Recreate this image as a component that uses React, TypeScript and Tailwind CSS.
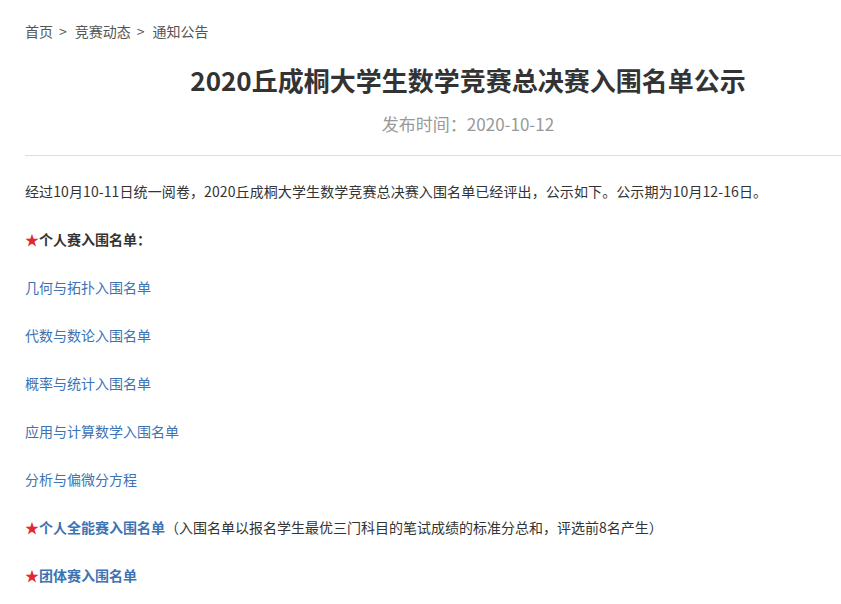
export default function App() {
  const links = [
    "几何与拓扑入围名单",
    "代数与数论入围名单",
    "概率与统计入围名单",
    "应用与计算数学入围名单",
    "分析与偏微分方程",
  ];

  return (
    <div
      className="w-full min-h-screen overflow-hidden bg-white text-[#333]"
      style={{ fontFamily: '"Noto Sans CJK SC", "Noto Sans", sans-serif' }}
    >
      <div className="ml-[25px] w-[886px] pt-[19px]">
        {/* breadcrumb */}
        <div className="flex items-center text-[14px] leading-[24px] text-[#555]">
          <span>首页</span>
          <span className="ml-[6px] mr-[8px]">&gt;</span>
          <span>竞赛动态</span>
          <span className="ml-[6px] mr-[8px]">&gt;</span>
          <span>通知公告</span>
        </div>

        <h1 className="mt-[17px] text-center text-[26px] font-bold leading-[40px] text-[#333]">
          2020丘成桐大学生数学竞赛总决赛入围名单公示
        </h1>
        <div className="mt-[12px] text-center text-[17px] leading-[24px] text-[#999]">
          发布时间：2020-10-12
        </div>

        <div className="mt-[19px] border-b border-[#ddd]" />

        <div className="pt-[23px] text-[14px] leading-[24px]">
          <p className="mb-[24px] tracking-[0.1px]">
            经过10月10-11日统一阅卷，2020丘成桐大学生数学竞赛总决赛入围名单已经评出，公示如下。公示期为10月12-16日。
          </p>
          <p className="mb-[24px] font-bold">
            <span className="text-[#e4262c]">★</span>个人赛入围名单：
          </p>
          {links.map((l) => (
            <p key={l} className="mb-[24px]">
              <a className="text-[#3b73b4]">{l}</a>
            </p>
          ))}
          <p className="mb-[24px]">
            <span className="text-[#e4262c]">★</span>
            <a className="font-bold text-[#3b73b4]">个人全能赛入围名单</a>
            （入围名单以报名学生最优三门科目的笔试成绩的标准分总和，评选前8名产生）
          </p>
          <p className="mb-[24px]">
            <span className="text-[#e4262c]">★</span>
            <a className="font-bold text-[#3b73b4]">团体赛入围名单</a>
          </p>
        </div>
      </div>
    </div>
  );
}
